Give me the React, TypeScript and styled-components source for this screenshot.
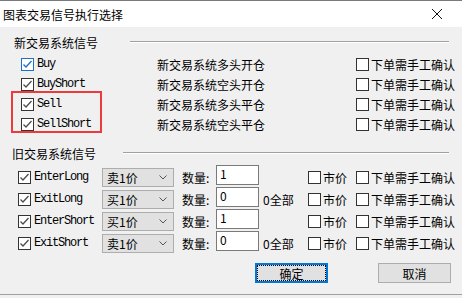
import React from 'react';
import styled, { createGlobalStyle } from "styled-components";

const GlobalStyle = createGlobalStyle`
    html, body {
        margin: 0;
        padding: 0;
        background: #f0f0f0;
    }
`

const cjk = `"Noto Sans CJK SC", "Noto Sans", sans-serif`

type CheckProps = {
    checked?: boolean
    focus?: boolean
}

const Check = (props: CheckProps) => {
    return (
        <Box $focus={props.focus}>
            {props.checked &&
                <svg width="11" height="11" viewBox="0 0 11 11">
                    <path d="M1.5 5.5 L4 8 L9.5 2" fill="none"
                          stroke={props.focus ? '#1a6fc9' : '#4d4d4d'} strokeWidth="1.3"/>
                </svg>}
        </Box>
    );
};

type NewRowType = {
    name: string
    desc: string
}

const newRows: NewRowType[] = [
    {name: 'Buy', desc: '新交易系统多头开仓'},
    {name: 'BuyShort', desc: '新交易系统空头开仓'},
    {name: 'Sell', desc: '新交易系统多头平仓'},
    {name: 'SellShort', desc: '新交易系统空头平仓'},
]

type OldRowType = {
    name: string
    price: string
    qty: string
    all: boolean
}

const oldRows: OldRowType[] = [
    {name: 'EnterLong', price: '卖1价', qty: '1', all: false},
    {name: 'ExitLong', price: '买1价', qty: '0', all: true},
    {name: 'EnterShort', price: '买1价', qty: '1', all: false},
    {name: 'ExitShort', price: '卖1价', qty: '0', all: true},
]

export default function App() {
    return (
        <Window>
            <GlobalStyle/>
            <TitleBar>
                <span>图表交易信号执行选择</span>
                <svg width="12" height="12" viewBox="0 0 12 12">
                    <path d="M1 1 L11 11 M11 1 L1 11" stroke="#111" strokeWidth="1"/>
                </svg>
            </TitleBar>

            <GroupHeader $top={8}>
                <GroupLabel $left={14} $w={116}>新交易系统信号</GroupLabel>
                <GroupLine/>
            </GroupHeader>
            <NewRows>
                {newRows.map((r, i) => (
                    <NewRow key={r.name}>
                        <Cell $w={136}>
                            <Check checked focus={i === 0}/>
                            <Code>{r.name}</Code>
                        </Cell>
                        <Cell $w={199}>{r.desc}</Cell>
                        <Cell>
                            <Check/>
                            <Text>下单需手工确认</Text>
                        </Cell>
                    </NewRow>
                ))}
                <Highlight/>
            </NewRows>

            <GroupHeader $top={12}>
                <GroupLabel $left={12} $w={111}>旧交易系统信号</GroupLabel>
                <GroupLine/>
            </GroupHeader>
            <OldRows>
                {oldRows.map(r => (
                    <OldRow key={r.name}>
                        <Cell $w={84}>
                            <Check checked/>
                            <Code>{r.name}</Code>
                        </Cell>
                        <Combo>
                            <span>{r.price}</span>
                            <svg width="8" height="5" viewBox="0 0 8 5">
                                <path d="M0.5 0.5 L4 4 L7.5 0.5" fill="none" stroke="#555" strokeWidth="1"/>
                            </svg>
                        </Combo>
                        <Cell $w={42} $pl={8}>数量:</Cell>
                        <Input>{r.qty}</Input>
                        <Cell $w={49} $pl={4}>{r.all ? '0全部' : ''}</Cell>
                        <Cell $w={48}>
                            <Check/>
                            <Text>市价</Text>
                        </Cell>
                        <Cell>
                            <Check/>
                            <Text>下单需手工确认</Text>
                        </Cell>
                    </OldRow>
                ))}
            </OldRows>

            <Buttons>
                <Button $primary>
                    <Focus>确定</Focus>
                </Button>
                <Button>取消</Button>
            </Buttons>
            <BottomLine/>
        </Window>
    );
}

const Window = styled.div`
    position: relative;
    width: 462px;
    height: 298px;
    box-sizing: border-box;
    border-top: 1px solid #7a7a7a;
    background: #f0f0f0;
    font-family: ${cjk};
    font-size: 12px;
    color: #000;
    overflow: hidden;
`

const TitleBar = styled.div`
    height: 26px;
    background: #fff;
    display: flex;
    align-items: center;
    justify-content: space-between;
    padding: 0 19px 0 3px;
    font-size: 12px;
`

const GroupHeader = styled.div<{ $top: number }>`
    display: flex;
    align-items: center;
    height: 16px;
    margin-top: ${p => p.$top}px;
    padding-right: 13px;
`

const GroupLabel = styled.div<{ $left: number, $w: number }>`
    padding-left: ${p => p.$left}px;
    width: ${p => p.$w}px;
    line-height: 16px;
`

const GroupLine = styled.div`
    flex: 1;
    height: 0;
    border-top: 1px solid #a0a0a0;
    border-bottom: 1px solid #fff;
    margin-top: -2px;
`

const NewRows = styled.div`
    position: relative;
    margin-top: 3px;
    padding-left: 21px;
`

const NewRow = styled.div`
    display: flex;
    align-items: center;
    height: 20px;
`

const Highlight = styled.div`
    position: absolute;
    left: 11px;
    top: 37px;
    width: 87px;
    height: 38px;
    border: 2px solid #ec3b3b;
    pointer-events: none;
`

const OldRows = styled.div`
    margin-top: 4px;
    padding-left: 18px;
`

const OldRow = styled.div`
    display: flex;
    align-items: center;
    height: 22px;
`

const Cell = styled.div<{ $w?: number, $pl?: number }>`
    display: flex;
    align-items: center;
    width: ${p => p.$w ? `${p.$w}px` : 'auto'};
    padding-left: ${p => p.$pl || 0}px;
    box-sizing: border-box;
    white-space: nowrap;
`

const Box = styled.span<{ $focus?: boolean }>`
    display: inline-flex;
    align-items: center;
    justify-content: center;
    width: 13px;
    height: 13px;
    box-sizing: border-box;
    border: 1px solid ${p => p.$focus ? '#1a6fc9' : '#333'};
    background: #fff;
    flex-shrink: 0;
`

const Code = styled.span`
    margin-left: 3px;
    font-family: "Liberation Mono", "Courier New", monospace;
    font-size: 12px;
    letter-spacing: -1.2px;
`

const Text = styled.span`
    margin-left: 2px;
`

const Combo = styled.div`
    display: flex;
    align-items: center;
    justify-content: space-between;
    width: 72px;
    height: 19px;
    box-sizing: border-box;
    padding: 0 6px 0 4px;
    background: #e1e1e1;
    border: 1px solid #adadad;
`

const Input = styled.div`
    width: 43px;
    height: 20px;
    box-sizing: border-box;
    padding-left: 3px;
    line-height: 16px;
    background: #fff;
    border: 1px solid #7a7a7a;
    margin-top: -4px;
`

const Buttons = styled.div`
    display: flex;
    gap: 50px;
    margin-top: 9px;
    padding-left: 255px;
`

const Button = styled.div<{ $primary?: boolean }>`
    display: flex;
    align-items: center;
    justify-content: center;
    width: 73px;
    height: 20px;
    box-sizing: border-box;
    background: #e1e1e1;
    border: ${p => p.$primary ? '2px solid #0078d7' : '1px solid #adadad'};
`

const Focus = styled.div`
    display: flex;
    align-items: center;
    justify-content: center;
    width: 100%;
    height: 100%;
    box-sizing: border-box;
    border: 1px dotted #000;
`

const BottomLine = styled.div`
    margin-top: 11px;
    border-top: 1px solid #a0a0a0;
`
